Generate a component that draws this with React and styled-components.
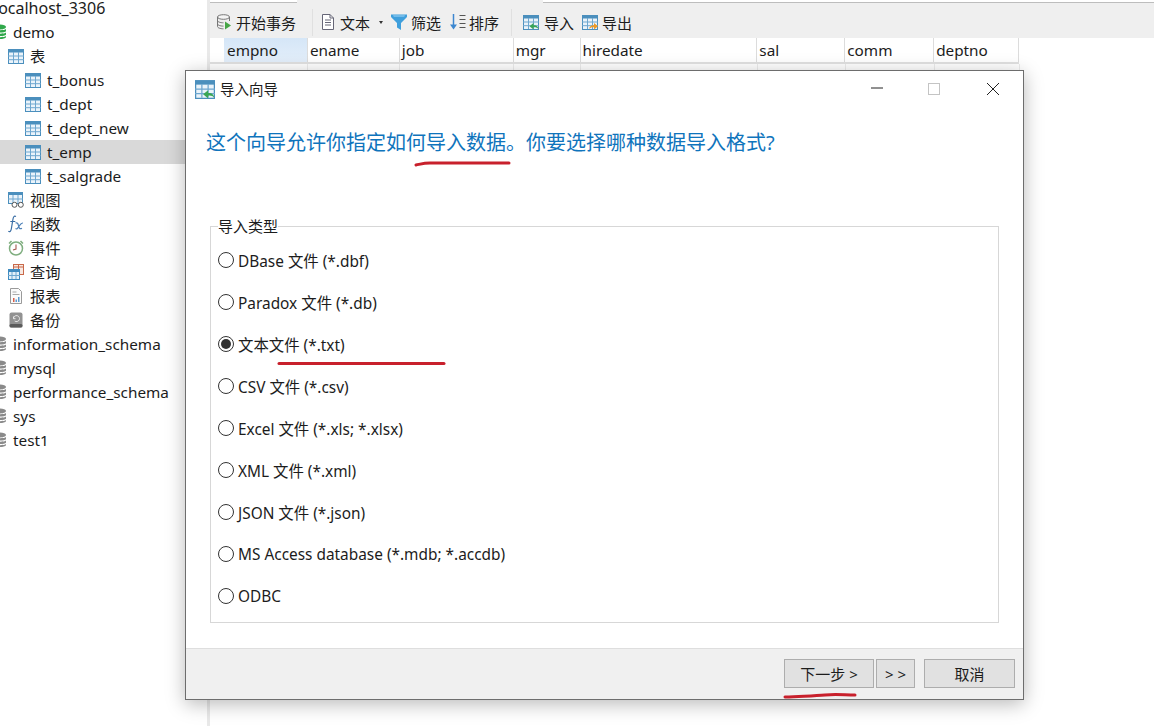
import React from 'react';
import styled, { createGlobalStyle } from 'styled-components';

const GlobalStyle = createGlobalStyle`
  html, body {
    margin: 0;
    padding: 0;
    background: #fff;
    overflow: hidden;
  }
  body {
    font-family: "Noto Sans", "Noto Sans CJK SC", sans-serif;
    color: #1c1c1c;
  }
`;

const Page = styled.div`
  position: relative;
  display: flex;
  width: 1154px;
  height: 726px;
  overflow: hidden;
`;

const Sidebar = styled.div`
  flex: 0 0 207px;
  margin-top: -4px;
  overflow: hidden;
`;

const Splitter = styled.div`
  flex: 0 0 3px;
  background: #e9e9e9;
`;

const TreeRow = styled.div`
  display: flex;
  align-items: center;
  gap: ${(p) => (p.$level === 0 ? 7 : 6)}px;
  height: 24px;
  padding-left: ${(p) => [0, 8, 25][p.$level]}px;
  margin-left: ${(p) => (p.$level === 0 ? -6 : 0)}px;
  background: ${(p) => (p.$selected ? '#d9d9d9' : 'transparent')};
  font-size: ${(p) => (p.$clipped ? 16 : 15.3)}px;
  line-height: 22px;
  white-space: nowrap;
`;

const Main = styled.div`
  flex: 1;
  min-width: 0;
`;

const TabStrip = styled.div`
  display: flex;
  height: 3px;
`;

const TabEdge = styled.div`
  box-sizing: border-box;
  flex: ${(p) => (p.$width ? `0 0 ${p.$width}px` : 1)};
  background: ${(p) => (p.$active ? '#efefef' : '#fff')};
  border-bottom: 1px solid ${(p) => (p.$active ? '#efefef' : '#bdbdbd')};
`;

const Toolbar = styled.div`
  box-sizing: border-box;
  display: flex;
  align-items: center;
  height: 35px;
  padding: 3px 0 0 7px;
  background: #efefef;
  font-size: 15px;
`;

const ToolButton = styled.div`
  display: flex;
  align-items: center;
  gap: ${(p) => p.$gap ?? 4}px;
  margin-left: ${(p) => p.$left ?? 0}px;
  white-space: nowrap;
`;

const ToolDivider = styled.div`
  width: 1px;
  height: 27px;
  margin: 0 ${(p) => p.$after}px 0 ${(p) => p.$before}px;
  background: #e0e0e0;
`;

const Caret = styled.span`
  width: 0;
  height: 0;
  margin-left: 4px;
  border-left: 2.5px solid transparent;
  border-right: 2.5px solid transparent;
  border-top: 3px solid #333;
`;

const HeaderRow = styled.div`
  display: flex;
  height: 24px;
  padding-left: 14px;
  width: 795px;
  border-bottom: 2px solid #e1e1e1;
`;

const HeaderCell = styled.div`
  box-sizing: border-box;
  width: ${(p) => p.$width}px;
  padding-left: ${(p) => (p.$active ? 3 : 2)}px;
  line-height: 24px;
  font-size: 15.3px;
  border-right: 1px solid #dcdcdc;
  background: ${(p) => (p.$active ? 'linear-gradient(#d5e6f7, #e3eefa)' : '#fff')};
`;

const BlankRow = styled.div`
  display: flex;
  height: 8px;
  padding-left: 14px;
`;

const BlankCell = styled.div`
  box-sizing: border-box;
  width: ${(p) => p.$width}px;
  border-right: 1px solid #ececec;
`;

const Dialog = styled.div`
  position: absolute;
  left: 185px;
  top: 70px;
  display: flex;
  flex-direction: column;
  box-sizing: border-box;
  width: 839px;
  height: 630px;
  background: #fff;
  border: 1px solid #6d6d6d;
  box-shadow: 0 4px 18px rgba(0, 0, 0, 0.28);
`;

const TitleBar = styled.div`
  display: flex;
  align-items: center;
  gap: 5px;
  height: 36px;
  padding-left: 9px;
  font-size: 14.5px;
  line-height: 34px;
`;

const TitleText = styled.span`
  flex: 1;
`;

const WindowButton = styled.div`
  display: flex;
  align-items: center;
  justify-content: center;
  width: 46px;
  height: 36px;
  margin-right: ${(p) => p.$right}px;
`;

const Heading = styled.div`
  margin: 21px 0 0 20px;
  font-size: 20px;
  line-height: 30px;
  color: #0f74bc;
  white-space: nowrap;
`;

const TypeGroup = styled.fieldset`
  flex: 1;
  box-sizing: border-box;
  display: flex;
  flex-direction: column;
  margin: 59px 24px 25px 24px;
  padding: 4px 0 0 7px;
  border: 1px solid #d7d7d7;
  min-width: 0;
`;

const GroupLegend = styled.legend`
  padding: 0;
  font-size: 15px;
  line-height: 18px;
`;

const RadioRow = styled.label`
  display: flex;
  align-items: center;
  gap: 4px;
  height: 42px;
  font-size: 15.4px;
  white-space: nowrap;
`;

const RadioCircle = styled.span`
  box-sizing: border-box;
  display: flex;
  align-items: center;
  justify-content: center;
  width: 16px;
  height: 16px;
  border: 1px solid #333;
  border-radius: 50%;
  background: #fff;

  &::after {
    content: "";
    display: ${(p) => (p.$checked ? 'block' : 'none')};
    width: 10px;
    height: 10px;
    border-radius: 50%;
    background: #333;
  }
`;

const Footer = styled.div`
  display: flex;
  align-items: center;
  justify-content: flex-end;
  box-sizing: border-box;
  height: 51px;
  padding: 0 8px 1px 0;
  background: #f0f0f0;
  border-top: 1px solid #dedede;
`;

const WizardButton = styled.div`
  display: flex;
  align-items: center;
  justify-content: center;
  box-sizing: border-box;
  width: ${(p) => p.$width}px;
  height: 29px;
  margin-left: ${(p) => p.$left}px;
  background: #e1e1e1;
  border: 1px solid #adadad;
  font-size: 15px;
  white-space: pre;
`;

const Annotations = styled.svg`
  position: absolute;
  left: 0;
  top: 0;
  pointer-events: none;
`;

const IconBox = styled.svg`
  flex: none;
  display: block;
`;

function TableIcon({ size = 16, accent }) {
  return (
    <IconBox width={size} height={size} viewBox="0 0 16 16">
      <rect x="0.5" y="1.5" width="15" height="14" fill="#eaf3fa" stroke="#4b8fbd" />
      <rect x="0" y="1" width="16" height="3.5" fill="#4b8fbd" />
      <path d="M5.5 4v11M10.5 4v11M0 8h16M0 11.7h16" stroke="#6ea7cf" strokeWidth="1" fill="none" />
      {accent === 'import' && <path d="M15.5 15c-.5-3-2.500-4.200-5-3.800V9L6.500 12.200l4 3.300v-2.200c2-.3 3.700.2 5 1.700z" fill="#3aa655" />}
      {accent === 'export' && <path d="M7 15c.5-3 2.500-4.200 5-3.800V9l4 3.200-4 3.300v-2.200c-2-.3-3.700.2-5 1.700z" fill="#ef9a26" />}
    </IconBox>
  );
}

function DbIcon({ color }) {
  return (
    <IconBox width="12" height="16" viewBox="0 0 12 16">
      <ellipse cx="6" cy="3" rx="6" ry="2.600" fill={color} />
      <path d="M0 5c1 1.600 11 1.600 12 0v2.200c-1 1.800-11 1.800-12 0zM0 8.500c1 1.600 11 1.600 12 0v2.200c-1 1.800-11 1.800-12 0zM0 12c1 1.600 11 1.600 12 0v1.300c-1 2.400-11 2.400-12 0z" fill={color} />
    </IconBox>
  );
}

function ViewIcon() {
  return (
    <IconBox width="16" height="16" viewBox="0 0 16 16">
      <rect x="0.500" y="0.500" width="14" height="11" fill="#eaf3fa" stroke="#4b8fbd" />
      <rect x="0" y="0" width="15" height="3" fill="#4b8fbd" />
      <path d="M5 3v8M10 3v8M0 7h15" stroke="#6ea7cf" fill="none" />
      <circle cx="6.500" cy="12.800" r="2.500" fill="#fff" stroke="#555" />
      <circle cx="12.800" cy="12.800" r="2.500" fill="#fff" stroke="#555" />
    </IconBox>
  );
}

function FunctionIcon() {
  return (
    <IconBox width="16" height="18" viewBox="0 0 16 18">
      <path d="M8 1.500C6 .5 5.300 2 4.800 5L3.300 14c-.3 2-1.300 3-3 2.300M2.300 6.500h5" stroke="#3a6ea5" strokeWidth="1.200" fill="none" />
      <path d="M7.500 8c1.800-.7 2.500.5 3 2.700s1 3.800 3.500 2.500M15 8c-1.800-.3-3 1.800-4 3.300S9 14.500 7.500 13.500" stroke="#4f82b8" strokeWidth="1.200" fill="none" />
    </IconBox>
  );
}

function ClockIcon() {
  return (
    <IconBox width="16" height="16" viewBox="0 0 16 16">
      <circle cx="8" cy="8.500" r="6.500" fill="#fff" stroke="#7fae7f" strokeWidth="1.500" />
      <path d="M1 3.500L3.500 1M15 3.500L12.500 1" stroke="#7fae7f" strokeWidth="1.500" fill="none" />
      <path d="M8 4.500v4.500l-3 1" stroke="#a5584f" strokeWidth="1.100" fill="none" />
    </IconBox>
  );
}

function QueryIcon() {
  return (
    <IconBox width="16" height="16" viewBox="0 0 16 16">
      <rect x="5.500" y="0.500" width="10" height="10" fill="#f7e9e2" stroke="#c9694a" />
      <path d="M5 3h11M10.500 1v9" stroke="#c9694a" fill="none" />
      <rect x="0.500" y="5.500" width="11" height="10" fill="#e3f0f9" stroke="#3f8bc0" />
      <rect x="0" y="5" width="12" height="3" fill="#3f8bc0" />
      <path d="M4 8v7M8 8v7M0 11.500h12" stroke="#6ea7cf" fill="none" />
    </IconBox>
  );
}

function ReportIcon() {
  return (
    <IconBox width="16" height="16" viewBox="0 0 16 16">
      <path d="M2.500.5h8l3 3v12h-11z" fill="#fbfbfb" stroke="#9a9a9a" />
      <path d="M4.500 4h4M4.500 6.500h7" stroke="#aaa" fill="none" />
      <path d="M5 10h1.500v4H5z" fill="#d9604a" />
      <path d="M7.500 11.500H9V14H7.500z" fill="#5e9bd0" />
      <path d="M10 9h1.500v5H10z" fill="#5e9bd0" />
    </IconBox>
  );
}

function BackupIcon() {
  return (
    <IconBox width="16" height="16" viewBox="0 0 16 16">
      <rect x="1.500" y="0.500" width="13" height="15" rx="2" fill="#929292" />
      <rect x="1.500" y="12" width="13" height="3.500" rx="1.500" fill="#5b5b5b" />
      <path d="M5.500 6.500a3 3 0 1 1 1.200 2.500M5.500 4.500v2.200h2" stroke="#e8e8e8" strokeWidth="1" fill="none" />
    </IconBox>
  );
}

function TransactionIcon() {
  return (
    <IconBox width="15" height="16" viewBox="0 0 15 16">
      <ellipse cx="6.500" cy="3" rx="6" ry="2.300" fill="#f4f4f4" stroke="#777" />
      <path d="M.5 3v9.500c0 1.300 2.700 2.300 6 2.300M12.500 3v4M.5 6.500c0 1.300 2.700 2.300 6 2.300M.5 9.800c0 1.300 2.700 2.300 6 2.300" fill="none" stroke="#777" />
      <path d="M8 7.500l6 4-6 4z" fill="#46a546" />
    </IconBox>
  );
}

function TextIcon() {
  return (
    <IconBox width="14" height="16" viewBox="0 0 14 16">
      <path d="M1.500.5h7.500l3.500 3.500v11.500h-11z" fill="#fff" stroke="#667" />
      <path d="M9 .5V4h3.500M4 6h6M4 8.500h6M4 11h6" fill="none" stroke="#667" />
    </IconBox>
  );
}

function FilterIcon() {
  return (
    <IconBox width="16" height="16" viewBox="0 0 16 16">
      <path d="M0 .5h16v2.500L10 9v7l-4-2.500V9L0 3z" fill="#3f9fdc" />
      <path d="M2 1.500h12l-.8 1H2.800z" fill="#a6d8f5" />
    </IconBox>
  );
}

function SortIcon() {
  return (
    <IconBox width="16" height="16" viewBox="0 0 16 16">
      <path d="M3.500 0v13" stroke="#3c87d0" strokeWidth="1.500" fill="none" />
      <path d="M0 10.500h7L3.500 15.500z" fill="#3c87d0" />
      <path d="M9.500 1.500h6M9.500 5.500h6M9.500 9.500h6M9.500 13.500h6" stroke="#555" fill="none" />
    </IconBox>
  );
}

const treeItems = [
  { level: 0, label: 'localhost_3306', clipped: true },
  { level: 0, label: 'demo', icon: <DbIcon color="#2fa84a" /> },
  { level: 1, label: '表', icon: <TableIcon /> },
  { level: 2, label: 't_bonus', icon: <TableIcon /> },
  { level: 2, label: 't_dept', icon: <TableIcon /> },
  { level: 2, label: 't_dept_new', icon: <TableIcon /> },
  { level: 2, label: 't_emp', icon: <TableIcon />, selected: true },
  { level: 2, label: 't_salgrade', icon: <TableIcon /> },
  { level: 1, label: '视图', icon: <ViewIcon /> },
  { level: 1, label: '函数', icon: <FunctionIcon /> },
  { level: 1, label: '事件', icon: <ClockIcon /> },
  { level: 1, label: '查询', icon: <QueryIcon /> },
  { level: 1, label: '报表', icon: <ReportIcon /> },
  { level: 1, label: '备份', icon: <BackupIcon /> },
  { level: 0, label: 'information_schema', icon: <DbIcon color="#8a8a8a" /> },
  { level: 0, label: 'mysql', icon: <DbIcon color="#8a8a8a" /> },
  { level: 0, label: 'performance_schema', icon: <DbIcon color="#8a8a8a" /> },
  { level: 0, label: 'sys', icon: <DbIcon color="#8a8a8a" /> },
  { level: 0, label: 'test1', icon: <DbIcon color="#8a8a8a" /> },
];

const columns = [
  { name: 'empno', width: 84, active: true },
  { name: 'ename', width: 92 },
  { name: 'job', width: 114 },
  { name: 'mgr', width: 67 },
  { name: 'hiredate', width: 177 },
  { name: 'sal', width: 88 },
  { name: 'comm', width: 89 },
  { name: 'deptno', width: 85 },
];

const importTypes = [
  'DBase 文件 (*.dbf)',
  'Paradox 文件 (*.db)',
  '文本文件 (*.txt)',
  'CSV 文件 (*.csv)',
  'Excel 文件 (*.xls; *.xlsx)',
  'XML 文件 (*.xml)',
  'JSON 文件 (*.json)',
  'MS Access database (*.mdb; *.accdb)',
  'ODBC',
];

export default function App() {
  return (
    <Page>
      <GlobalStyle />
      <Sidebar>
        {treeItems.map((item) => (
          <TreeRow key={item.label} $level={item.level} $selected={item.selected} $clipped={item.clipped}>
            {item.icon}
            {item.label}
          </TreeRow>
        ))}
      </Sidebar>
      <Splitter />
      <Main>
        <TabStrip>
          <TabEdge $width={87} />
          <TabEdge $width={246} $active />
          <TabEdge />
        </TabStrip>
        <Toolbar>
          <ToolButton><TransactionIcon />开始事务</ToolButton>
          <ToolDivider $before={16} $after={8} />
          <ToolButton $gap={5}><TextIcon />文本<Caret /></ToolButton>
          <ToolButton $left={8}><FilterIcon />筛选</ToolButton>
          <ToolButton $left={9} $gap={3}><SortIcon />排序</ToolButton>
          <ToolDivider $before={12} $after={11} />
          <ToolButton $gap={5}><TableIcon accent="import" />导入</ToolButton>
          <ToolButton $left={8}><TableIcon accent="export" />导出</ToolButton>
        </Toolbar>
        <HeaderRow>
          {columns.map((col) => (
            <HeaderCell key={col.name} $width={col.width} $active={col.active}>{col.name}</HeaderCell>
          ))}
        </HeaderRow>
        <BlankRow>
          {columns.map((col) => (
            <BlankCell key={col.name} $width={col.width} />
          ))}
        </BlankRow>
      </Main>
      <Dialog>
        <TitleBar>
          <TableIcon size={20} accent="import" />
          <TitleText>导入向导</TitleText>
          <WindowButton $right={6}>
            <svg width="12" height="12" viewBox="0 0 12 12"><path d="M0 5h12" stroke="#222" fill="none" /></svg>
          </WindowButton>
          <WindowButton $right={8}>
            <svg width="12" height="12" viewBox="0 0 12 12"><rect x="0.500" y="0.500" width="11" height="11" stroke="#c4c4c4" fill="none" /></svg>
          </WindowButton>
          <WindowButton $right={7}>
            <svg width="14" height="14" viewBox="0 0 14 14"><path d="M1 1l12 12M13 1L1 13" stroke="#222" fill="none" /></svg>
          </WindowButton>
        </TitleBar>
        <Heading>这个向导允许你指定如何导入数据。你要选择哪种数据导入格式?</Heading>
        <TypeGroup>
          <GroupLegend>导入类型</GroupLegend>
          {importTypes.map((type) => (
            <RadioRow key={type}>
              <RadioCircle $checked={type.startsWith('文本')} />
              {type}
            </RadioRow>
          ))}
        </TypeGroup>
        <Footer>
          <WizardButton $width={90} $left={0}>下一步 &gt;</WizardButton>
          <WizardButton $width={39} $left={2}>&gt; &gt;</WizardButton>
          <WizardButton $width={91} $left={9}>取消</WizardButton>
        </Footer>
      </Dialog>
      <Annotations width="1154" height="726" viewBox="0 0 1154 726">
        <path d="M416 165c5-1 8-2 14-2h79" stroke="#c8202c" strokeWidth="3" fill="none" strokeLinecap="round" />
        <path d="M279 363.500h165" stroke="#c8202c" strokeWidth="3" fill="none" strokeLinecap="round" />
        <path d="M785 697c20-1 30-1 40-2 10-1 20 0 30 0" stroke="#c8202c" strokeWidth="3" fill="none" strokeLinecap="round" />
      </Annotations>
    </Page>
  );
}
